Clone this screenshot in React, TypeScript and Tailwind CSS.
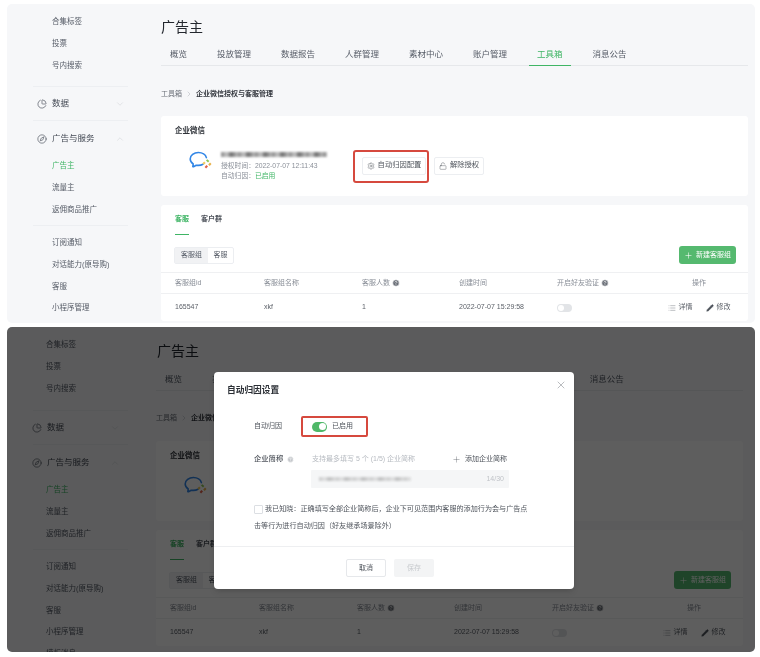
import { ChevronDown, ChevronRight, ChevronUp, CircleHelp, Compass, List, LockOpen, Pencil, PieChart, Plus, Settings, X } from "lucide-react";

const tabs = ["概览", "投放管理", "数据报告", "人群管理", "素材中心", "账户管理", "工具箱", "消息公告"];

function WeCom() {
  return (
    <svg width="24" height="21" viewBox="0 0 24 21" fill="none">
      <path
        d="M14 14.300c-1.300.7-2.900 1.100-4.600 1.100-.8 0-1.500-.1-2.200-.2l-2.700 1.500c-.4.200-.7 0-.6-.4l.3-2.300C2.300 12.700 1.200 10.900 1.200 9c0-3.600 3.700-6.500 8.200-6.500 3.900 0 7.200 2.200 8 5.100"
        stroke="#3286e6"
        strokeWidth="1.600"
        strokeLinecap="round"
        strokeLinejoin="round"
      />
      <path d="M18.300 9.200l2 1.900-1.300 1.400-2-1.900z" fill="#8cc653" />
      <path d="M21 12.500l1.500 1.500-1.800 1.900-1.500-1.500z" fill="#e8b24a" />
      <path d="M17.500 15l1.500 1.500-1.900 1.900-1.500-1.500z" fill="#e2614a" />
      <path d="M15.200 11.500l1.500 1.500-1.800 1.800-1.500-1.500z" fill="#f2c95a" />
    </svg>
  );
}

function Redacted({ className }: { className: string }) {
  return <div className={`blur-[1.200px] bg-[repeating-linear-gradient(90deg,#8d8d8d_0px,#c4c4c4_6px,#6f6f6f_10px,#bdbdbd_17px)] ${className}`} />;
}

function SubItem({ label, active }: { label: string; active?: boolean }) {
  return (
    <div className={`flex h-[21.700px] items-center text-[7.500px] ${active ? "text-[#3fb565]" : "text-[#555b66]"}`}>
      {label}
    </div>
  );
}

function Sidebar({ dim }: { dim?: boolean }) {
  const textPad = dim ? "pl-[39px]" : "pl-[45px]";
  const headPad = dim ? "pl-[25px]" : "pl-[30px]";
  return (
    <aside className={`shrink-0 pt-[7px] ${dim ? "w-[149px]" : "w-[154px]"}`}>
      <div className={textPad}>
        <SubItem label="合集标签" />
        <SubItem label="投票" />
        <SubItem label="号内搜索" />
      </div>
      <div className={`ml-[26px] h-px w-[95px] bg-[#edeff2] ${dim ? "mt-[11px]" : "mt-[10px]"}`} />
      <div className={`flex h-[33px] items-center text-[8.500px] text-[#444a55] ${headPad}`}>
        <PieChart size={10} strokeWidth={1.500} className="mr-[5px]" />
        <span className="w-[63px]">数据</span>
        <ChevronDown size={10} strokeWidth={1} className="text-[#c4c8cd]" />
      </div>
      <div className="ml-[26px] h-px w-[95px] bg-[#edeff2]" />
      <div className={`mt-[1px] flex h-[33px] items-center text-[8.500px] text-[#444a55] ${headPad}`}>
        <Compass size={10} strokeWidth={1.500} className="mr-[5px]" />
        <span className="w-[63px]">广告与服务</span>
        <ChevronUp size={10} strokeWidth={1} className="text-[#c4c8cd]" />
      </div>
      <div className={textPad}>
        <SubItem label="广告主" active />
        <SubItem label="流量主" />
        <SubItem label="返佣商品推广" />
      </div>
      <div className="mt-[5px] ml-[26px] h-px w-[95px] bg-[#edeff2]" />
      <div className={`mt-[6px] ${textPad}`}>
        <SubItem label="订阅通知" />
        <SubItem label="对话能力(原导购)" />
        <SubItem label="客服" />
        <SubItem label="小程序管理" />
        {dim && <SubItem label="模板消息" />}
      </div>
    </aside>
  );
}

function TableHead({ label, help, center }: { label: string; help?: boolean; center?: boolean }) {
  return (
    <div className={`flex items-center gap-[2px] ${center ? "justify-center" : ""}`}>
      {label}
      {help && <CircleHelp size={8} fill="#6b7078" stroke="#ffffff" strokeWidth={2} />}
    </div>
  );
}

function Main({ dim }: { dim?: boolean }) {
  return (
    <main className={`min-w-0 flex-1 ${dim ? "pt-[14px]" : "pt-[13px]"}`}>
      <h1 className={`h-[20px] text-[14px] font-normal leading-[20px] text-[#23272e] ${dim ? "ml-px" : ""}`}>广告主</h1>
      <nav className={`flex h-[23px] border-b border-[#e6e8eb] pl-px ${dim ? "mt-[7px] gap-[14.300px]" : "mt-[6px] gap-[14px]"}`}>
        {tabs.map((t) => (
          <div
            key={t}
            className={`-mb-px flex items-center border-b px-[8px] text-[8.500px] ${t === "工具箱" ? "border-[#3fb565] text-[#3fb565]" : "border-transparent text-[#555b66]"}`}
          >
            {t}
          </div>
        ))}
      </nav>
      <div className={`flex h-[10px] items-center text-[7px] text-[#6a6f78] ${dim ? "mt-[22px]" : "mt-[23px]"}`}>
        <span>工具箱</span>
        <ChevronRight size={8} strokeWidth={1} className="mx-[3px] text-[#8a8f98]" />
        <span className="font-bold text-[#33373e]">企业微信授权与客服管理</span>
      </div>

      <section className={`h-[80px] rounded-[3px] bg-white pl-[14px] pt-[10px] ${dim ? "mt-[18px]" : "mt-[17px]"}`}>
        <h2 className="h-[10px] text-[7.500px] font-bold leading-[10px] text-[#2e3238]">企业微信</h2>
        <div className="mt-[16px] flex">
          <div className="ml-[14px] mr-[8px] -mt-[2px] shrink-0">
            <WeCom />
          </div>
          <div className="w-[141px] text-[6.800px] text-[#8a8f98]">
            <Redacted className="h-[5px] w-[106px]" />
            <div className="mt-[4px] h-[10px] leading-[10px]">授权时间：2022-07-07 12:11:43</div>
            <div className="h-[10px] leading-[10px]">
              自动归因：<span className="text-[#3fb565]">已启用</span>
            </div>
          </div>
          <div className="-mt-[2px] flex items-center gap-[8px]">
            <div className="relative flex h-[18px] w-[64px] items-center justify-center gap-[3px] rounded-[2px] border border-[#eceef1] bg-white text-[7.300px] text-[#4f545c]">
              <Settings size={8} strokeWidth={1.300} />
              自动归因配置
              {!dim && <div className="absolute -left-[10px] -right-[4px] -top-[8px] -bottom-[9px] rounded-[3px] border-2 border-[#d6493e]" />}
            </div>
            <div className="flex h-[18px] w-[50px] items-center justify-center gap-[3px] rounded-[2px] border border-[#eceef1] bg-white text-[7.300px] text-[#4f545c]">
              <LockOpen size={8} strokeWidth={1.300} />
              解除授权
            </div>
          </div>
        </div>
      </section>

      <section className="mt-[9px] h-[116px] rounded-[3px] bg-white pt-[8px]">
        <div className="flex gap-[12px] pl-[14px] text-[7px]">
          <div className="h-[22px] w-[14px] whitespace-nowrap border-b-[1.500px] border-[#3fb565] font-bold leading-[12px] text-[#3fb565]">客服</div>
          <div className="font-bold leading-[12px] text-[#4f545c]">客户群</div>
        </div>
        <div className="mt-[11px] flex h-[18px] items-center justify-between pl-[13px] pr-[12px]">
          <div className="flex h-[17px] rounded-[2px] border border-[#eceef1] text-[7px] text-[#555b66]">
            <div className="flex w-[33px] items-center justify-center bg-[#f1f2f4]">客服组</div>
            <div className="flex w-[25px] items-center justify-center">客服</div>
          </div>
          <div className="flex h-[18px] w-[57px] items-center justify-center gap-[3px] rounded-[3px] bg-[#55b96f] text-[7px] text-white">
            <Plus size={9} strokeWidth={1.500} />
            新建客服组
          </div>
        </div>
        <div className="mt-[8px] grid h-[22px] grid-cols-[103px_98px_97px_98px_93px_98px] items-center border-y border-[#eff0f2] text-[7px] text-[#8a8f98]">
          <div className="pl-[14px]">客服组id</div>
          <TableHead label="客服组名称" />
          <TableHead label="客服人数" help />
          <TableHead label="创建时间" />
          <TableHead label="开启好友验证" help />
          <TableHead label="操作" center />
        </div>
        <div className="grid h-[27px] grid-cols-[103px_98px_97px_98px_93px_98px] items-center text-[7px] text-[#5c6169]">
          <div className="pl-[14px]">165547</div>
          <div>xkf</div>
          <div>1</div>
          <div>2022-07-07 15:29:58</div>
          <div>
            <div className="h-[8px] w-[15px] rounded-full bg-[#e2e4e7] p-px">
              <div className="h-[6px] w-[6px] rounded-full bg-white" />
            </div>
          </div>
          <div className="flex items-center justify-center gap-[13px]">
            <span className="flex items-center gap-[3px]">
              <List size={8} strokeWidth={1.200} />
              详情
            </span>
            <span className="flex items-center gap-[3px]">
              <Pencil size={8} fill="#4a4f57" strokeWidth={1.200} />
              修改
            </span>
          </div>
        </div>
      </section>
    </main>
  );
}

function Modal() {
  return (
    <div className="absolute left-[207px] top-[45px] h-[217px] w-[360px] rounded-[4px] bg-white text-[#4f545c] shadow-md">
      <div className="flex h-[36px] items-start justify-between pl-[13px] pr-[7px] pt-[11px]">
        <h2 className="text-[8.700px] font-bold leading-[14px] text-[#2a2e34]">自动归因设置</h2>
        <X size={12} strokeWidth={1} className="-mt-[4px] text-[#777b81]" />
      </div>
      <div className="h-[138px] pl-[40px] pr-[46px] pt-[8px]">
        <div className="flex h-[21px] items-center text-[7px]">
          <span className="w-[47px]">自动归因</span>
          <div className="flex h-[21px] w-[67px] items-center gap-[5px] rounded-[2px] border-2 border-[#d6493e] pl-[9px]">
            <div className="flex h-[10px] w-[15px] justify-end rounded-full bg-[#4fb868] p-[1.500px]">
              <div className="h-[7px] w-[7px] rounded-full bg-white" />
            </div>
            已启用
          </div>
        </div>
        <div className="mt-[14px] flex h-[16px] items-center text-[7px]">
          <span className="flex w-[58px] items-center gap-[4px] text-[7.300px] font-medium">
            企业简称
            <CircleHelp size={7} fill="#c4c7cb" stroke="#ffffff" strokeWidth={2} />
          </span>
          <span className="w-[140px] text-[#b7bbc1]">支持最多填写 5 个 (1/5) 企业简称</span>
          <span className="flex items-center gap-[4px]">
            <Plus size={9} strokeWidth={1} />
            添加企业简称
          </span>
        </div>
        <div className="ml-[57px] mt-[3px] flex h-[18px] w-[198px] items-center justify-between rounded-[1px] bg-[#f5f6f7] pl-[8px] pr-[5px] text-[7px] text-[#c0c3c8]">
          <Redacted className="h-[4px] w-[92px] opacity-40" />
          14/30
        </div>
        <div className="mt-[16px] flex h-[11px] items-center text-[7.100px]">
          <div className="mr-[2px] h-[9px] w-[9px] rounded-[1px] border border-[#dcdfe3]" />
          我已知晓：正确填写全部企业简称后，企业下可见范围内客服的添加行为会与广告点
        </div>
        <div className="mt-[6px] h-[11px] text-[7.100px] leading-[11px]">击等行为进行自动归因（好友继承场景除外）</div>
      </div>
      <div className="flex h-[43px] justify-center gap-[8px] border-t border-[#eeeff1] pr-[8px] pt-[12px] text-[7px]">
        <div className="flex h-[18px] w-[40px] items-center justify-center rounded-[2px] border border-[#e6e8eb]">取消</div>
        <div className="flex h-[18px] w-[40px] items-center justify-center rounded-[2px] bg-[#f3f4f5] text-[#c8cbcf]">保存</div>
      </div>
    </div>
  );
}

export default function App() {
  return (
    <div className="h-[657px] w-[760px] overflow-hidden bg-white pl-[7px] pt-[4px] font-['Liberation_Sans','Noto_Sans_CJK_SC',sans-serif] blur-[0.500px]">
      <div className="flex h-[319px] w-[748px] overflow-hidden rounded-[5px] bg-[#f6f7f9] pr-[7px]">
        <Sidebar />
        <Main />
      </div>
      <div className="relative mt-[4px] flex h-[325px] w-[748px] overflow-hidden rounded-[5px] bg-[#f6f7f9] pr-[12px]">
        <Sidebar dim />
        <Main dim />
        <div className="absolute inset-0 bg-black/[0.63]" />
        <Modal />
      </div>
    </div>
  );
}
